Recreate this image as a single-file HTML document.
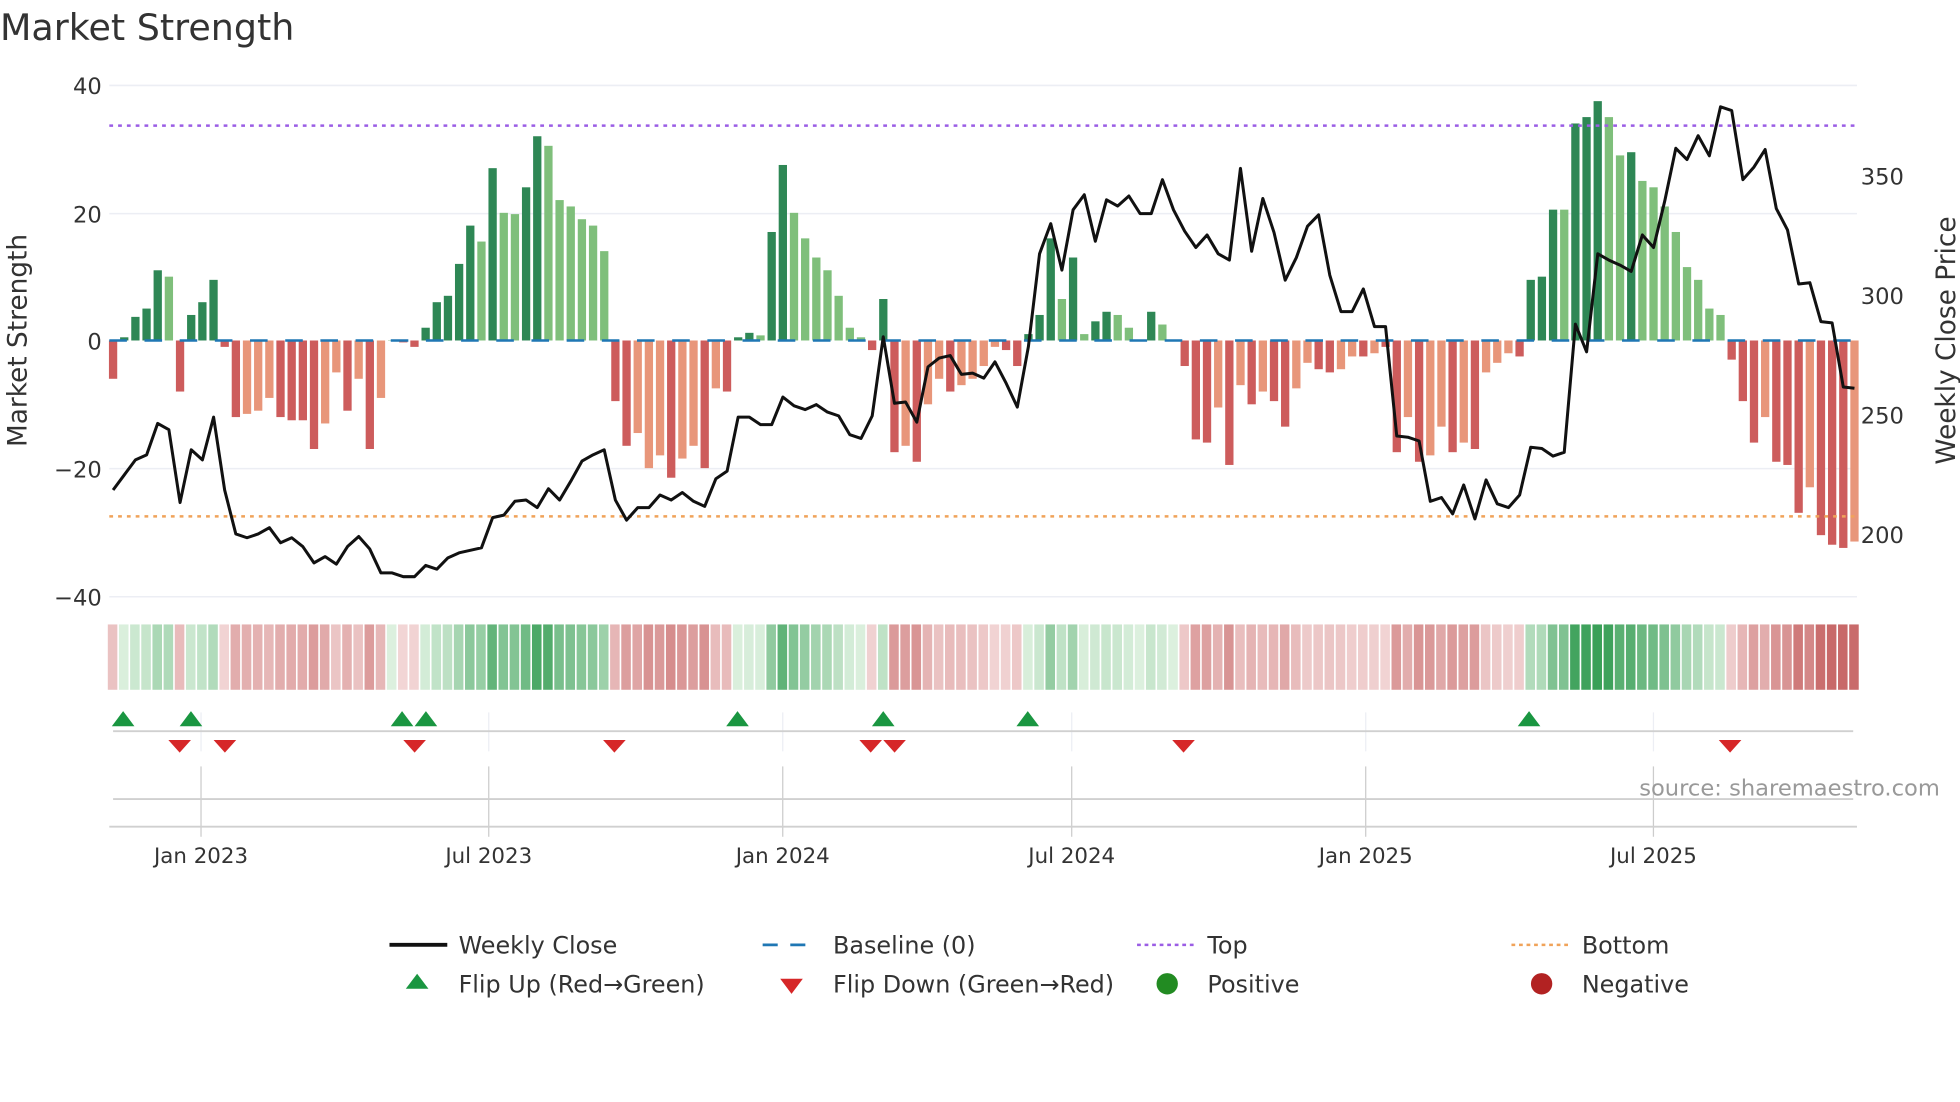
<!DOCTYPE html>
<html><head><meta charset="utf-8"><style>
html,body{margin:0;padding:0;background:#fff;}
svg{display:block;font-family:"DejaVu Sans","Liberation Sans",sans-serif;}
</style></head><body>
<svg id="s" width="1960" height="1102" viewBox="0 0 1560 877.1" xmlns="http://www.w3.org/2000/svg">
<rect width="1560" height="878" fill="#fff"/>
<text x="0" y="32" font-size="29" fill="#333">Market Strength</text>
<g stroke="#eceef4" stroke-width="1.2">
<line x1="87" x2="1478" y1="68" y2="68"/><line x1="87" x2="1478" y1="170" y2="170"/>
<line x1="87" x2="1478" y1="373" y2="373"/><line x1="87" x2="1478" y1="475" y2="475"/>
</g>
<g font-size="18" fill="#333" text-anchor="end">
<text x="81" y="75">40</text><text x="81" y="177">20</text><text x="81" y="278">0</text>
<text x="81" y="380">−20</text><text x="81" y="482">−40</text></g>
<g font-size="18" fill="#333">
<text x="1481" y="147">350</text><text x="1481" y="242">300</text><text x="1481" y="337">250</text><text x="1481" y="432">200</text></g>
<text transform="translate(21,271) rotate(-90)" font-size="21" fill="#333" text-anchor="middle">Market Strength</text>
<text transform="translate(1556,271) rotate(-90)" font-size="21" fill="#333" text-anchor="middle">Weekly Close Price</text>
<g id="bars"></g>
<line x1="87" x2="1478" y1="271" y2="271" stroke="#1f77b4" stroke-width="2" stroke-dasharray="14,14"/>
<line x1="87" x2="1478" y1="100" y2="100" stroke="#9b5de5" stroke-width="2" stroke-dasharray="3,4"/>
<line x1="87" x2="1478" y1="411" y2="411" stroke="#f0a35a" stroke-width="2" stroke-dasharray="3,4"/>
<polyline id="price" fill="none" stroke="#111" stroke-width="2.4" stroke-linejoin="round"/>
<g id="heat"></g>
<g id="vg" stroke="#eceef4" stroke-width="1"></g>
<line x1="90" x2="1475" y1="582" y2="582" stroke="#d0d0d0" stroke-width="1.5"/>
<g id="flips"></g>
<line x1="90" x2="1475" y1="636" y2="636" stroke="#d0d0d0" stroke-width="1.5"/>
<line x1="87" x2="1478" y1="658" y2="658" stroke="#d0d0d0" stroke-width="1.5"/>
<text x="1544" y="633" font-size="18" fill="#999" text-anchor="end">source: sharemaestro.com</text>
<g font-size="17" fill="#333" text-anchor="middle">
<text x="160" y="687">Jan 2023</text><text x="389" y="687">Jul 2023</text><text x="623" y="687">Jan 2024</text>
<text x="853" y="687">Jul 2024</text><text x="1087" y="687">Jan 2025</text><text x="1316" y="687">Jul 2025</text></g>
<g font-size="19" fill="#333">
<line x1="310" x2="356" y1="752" y2="752" stroke="#111" stroke-width="3"/><text x="365" y="759">Weekly Close</text>
<line x1="607" x2="650" y1="752" y2="752" stroke="#1f77b4" stroke-width="2.2" stroke-dasharray="12,10"/><text x="663" y="759">Baseline (0)</text>
<line x1="905" x2="950" y1="752" y2="752" stroke="#9b5de5" stroke-width="2" stroke-dasharray="3,3"/><text x="961" y="759">Top</text>
<line x1="1203" x2="1248" y1="752" y2="752" stroke="#f0a35a" stroke-width="2" stroke-dasharray="3,3"/><text x="1259" y="759">Bottom</text>
<polygon points="323,787 341,787 332,775" fill="#1a9641"/><text x="365" y="790">Flip Up (Red→Green)</text>
<polygon points="621,779 639,779 630,791" fill="#d62728"/><text x="663" y="790">Flip Down (Green→Red)</text>
<circle cx="929" cy="783" r="8.5" fill="#228b22"/><text x="961" y="790">Positive</text>
<circle cx="1227" cy="783" r="8.5" fill="#b22222"/><text x="1259" y="790">Negative</text>
</g>
</svg>
<script>
var V=[[-6,'r'],[0.5,'d'],[3.7,'d'],[5,'d'],[11,'d'],[10,'l'],[-8,'r'],[4,'d'],[6,'d'],[9.5,'d'],[-1,'r'],[-12,'r'],[-11.5,'o'],[-11,'o'],[-9,'o'],[-12,'r'],[-12.5,'r'],[-12.5,'r'],[-17,'r'],[-13,'o'],[-5,'o'],[-11,'r'],[-6,'o'],[-17,'r'],[-9,'o'],[0,'l'],[-0.3,'r'],[-1,'r'],[2,'d'],[6,'d'],[7,'d'],[12,'d'],[18,'d'],[15.5,'l'],[27,'d'],[20,'l'],[19.8,'l'],[24,'d'],[32,'d'],[30.5,'l'],[22,'l'],[21,'l'],[19,'l'],[18,'l'],[14,'l'],[-9.5,'r'],[-16.5,'r'],[-14.5,'o'],[-20,'o'],[-18,'o'],[-21.5,'r'],[-18.5,'o'],[-16.5,'o'],[-20,'r'],[-7.5,'o'],[-8,'r'],[0.5,'d'],[1.2,'d'],[0.8,'l'],[17,'d'],[27.5,'d'],[20,'l'],[16,'l'],[13,'l'],[11,'l'],[7,'l'],[2,'l'],[0.5,'l'],[-1.5,'r'],[6.5,'d'],[-17.5,'r'],[-16.5,'o'],[-19,'r'],[-10,'o'],[-6,'o'],[-8,'r'],[-7,'o'],[-6,'o'],[-4,'o'],[-1,'o'],[-1.5,'r'],[-4,'r'],[1,'d'],[4,'d'],[16,'d'],[6.5,'l'],[13,'d'],[1,'l'],[3,'d'],[4.5,'d'],[4,'l'],[2,'l'],[0,'l'],[4.5,'d'],[2.5,'l'],[0,'l'],[-4,'r'],[-15.5,'r'],[-16,'r'],[-10.5,'o'],[-19.5,'r'],[-7,'o'],[-10,'r'],[-8,'o'],[-9.5,'r'],[-13.5,'r'],[-7.5,'o'],[-3.5,'o'],[-4.5,'r'],[-5,'r'],[-4.5,'o'],[-2.5,'o'],[-2.5,'r'],[-2,'o'],[-1,'r'],[-17.5,'r'],[-12,'o'],[-19,'r'],[-18,'o'],[-13.5,'o'],[-17.5,'r'],[-16,'o'],[-17,'r'],[-5,'o'],[-3.5,'o'],[-2,'o'],[-2.5,'r'],[9.5,'d'],[10,'d'],[20.5,'d'],[20.5,'l'],[34,'d'],[35,'d'],[37.5,'d'],[35,'l'],[29,'l'],[29.5,'d'],[25,'l'],[24,'l'],[21,'l'],[17,'l'],[11.5,'l'],[9.5,'l'],[5,'l'],[4,'l'],[-3,'r'],[-9.5,'r'],[-16,'r'],[-12,'o'],[-19,'r'],[-19.5,'r'],[-27,'r'],[-23,'o'],[-30.5,'r'],[-32,'r'],[-32.5,'r'],[-31.5,'o']];
var P=[390,378,366,362,337,342,400,358,366,332,390,425,428,425,420,432,428,435,448,443,449,435,427,437,456,456,459,459,450,453,444,440,438,436,412,410,399,398,404,389,398,383,367,362,358,398,414,404,404,394,398,392,399,403,381,375,332,332,338,338,316,323,326,322,328,331,346,349,331,268,321,320,336,292,285,283,298,297,301,288,305,324,276,202,178,215,167,155,192,159,164,156,170,170,143,167,184,197,187,202,207,134,200,158,185,223,205,180,171,219,248,248,230,260,260,347,348,351,399,396,409,386,413,382,401,404,394,356,357,363,360,258,280,202,207,211,216,187,197,160,118,127,108,124,85,88,143,133,119,166,183,226,225,256,257,308,309];
var NS='http://www.w3.org/2000/svg',n=V.length,x0=90,st=(1476-90)/(n-1);
var col={d:'#2e8755',l:'#7fbf7b',r:'#cd5c5c',o:'#e8967a'};
function el(t,a,p){var e=document.createElementNS(NS,t);for(var k in a)e.setAttribute(k,a[k]);document.getElementById(p).appendChild(e);}
function mix(a,b,t){return 'rgb('+a.map(function(v,i){return Math.round(v+(b[i]-v)*t)}).join(',')+')';}
var pts=[];
for(var i=0;i<n;i++){var x=x0+i*st,v=V[i][0],h=Math.abs(v)*5.08;
 el('rect',{x:x-3.3,y:v>=0?271-h:271,width:6.6,height:Math.max(h,0.3),fill:col[V[i][1]]},'bars');
 var c=v>=0?mix([220,240,222],[58,160,88],Math.min(1,v/36)):mix([242,214,214],[200,105,105],Math.min(1,-v/32));
 el('rect',{x:x-4.2,y:497,width:7.6,height:52,fill:c},'heat');
 pts.push(x.toFixed(1)+','+(P[i]||P[P.length-1]));}
document.getElementById('price').setAttribute('points',pts.join(' '));
[160,389,623,853,1087,1316].forEach(function(x){el('line',{x1:x,x2:x,y1:567,y2:598},'vg');el('line',{x1:x,x2:x,y1:610,y2:666,stroke:'#ccc'},'vg');});
[98,152,320,339,587,703,818,1217].forEach(function(x){el('polygon',{points:(x-9)+',578 '+(x+9)+',578 '+x+',566',fill:'#1a9641'},'flips');});
[143,179,330,489,693,712,942,1377].forEach(function(x){el('polygon',{points:(x-9)+',589 '+(x+9)+',589 '+x+',599',fill:'#d62728'},'flips');});
</script>
</body></html>
